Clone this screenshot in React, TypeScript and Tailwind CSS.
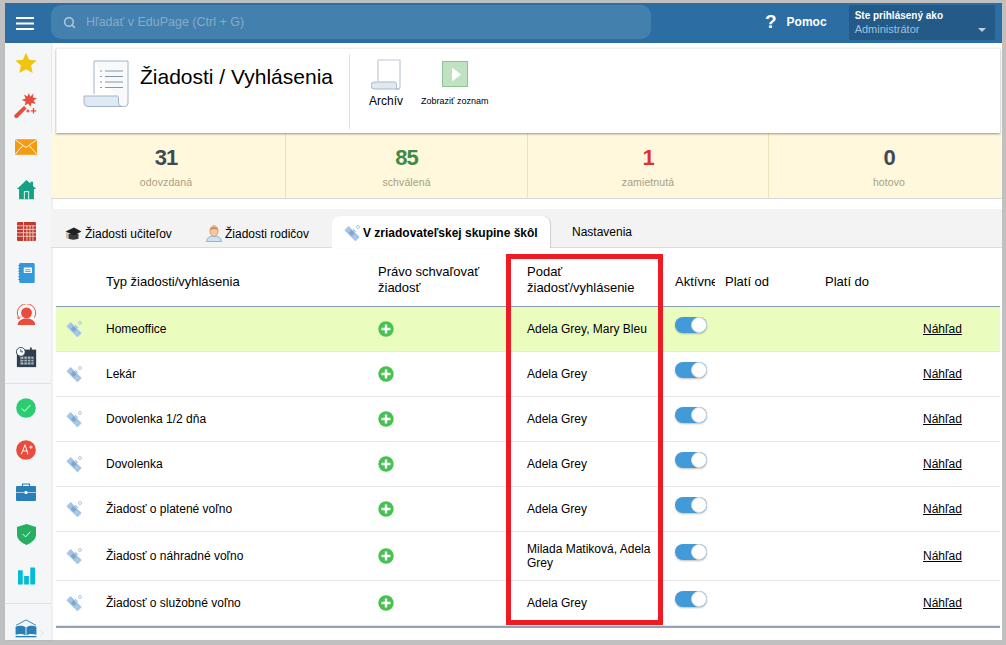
import React from 'react';
import { ChevronRight, Search } from 'lucide-react';

const FONT = "font-['Liberation_Sans',Arial,sans-serif]";

const Hamburger = () => (
  <svg width="18" height="13" viewBox="0 0 18 13">
    <path d="M0 1h18M0 6.500h18M0 12h18" stroke="#fff" strokeWidth="2" />
  </svg>
);

const Star = () => (
  <svg width="22" height="22" viewBox="0 0 24 24">
    <path d="M12 .8l3.4 7.6 8.3.9-6.2 5.500 1.800 8.200L12 18.800l-7.300 4.200 1.800-8.200L.3 9.300l8.300-.9z" fill="#f1c40f" />
  </svg>
);

const Wand = () => (
  <svg width="24" height="26" viewBox="0 0 24 26">
    <path d="M1 22.500l9-8.500 2.600 2.600-8.800 8.900a1.600 1.600 0 0 1-2.800-3z" fill="#e74c3c" />
    <path d="M15 1l1.200 3.800L19.500 1.500l-.6 4 4.100.7-3.400 2.300 2 3.500-4-1-1.200 3.800-2.200-3.300-3.500 1.900.9-4-3.900-1.400 3.900-1.600L10 2.500l3.300 2z" fill="#e74c3c" />
    <path d="M19.500 16v5.500M16.800 18.800h5.500M14 17.500v3M12.500 19h3" stroke="#e74c3c" strokeWidth="1.300" />
  </svg>
);

const Mail = () => (
  <svg width="22" height="16" viewBox="0 0 24 17">
    <rect width="24" height="17" fill="#f39c12" />
    <path d="M0 .5l12 8.500L24 .5M0 16.500l8.500-9.500M24 16.500L15.500 7" stroke="#fff" strokeWidth="1" fill="none" />
  </svg>
);

const Home = () => (
  <svg width="21" height="21" viewBox="0 0 24 24">
    <path d="M12 1L1 11.500h2.500V23h17V11.500H23l-3.500-3.400V3h-3v2.200z" fill="#16a085" />
    <rect x="9" y="14" width="6" height="9" fill="#fff" />
    <rect x="10" y="15" width="4" height="8" fill="#16a085" />
  </svg>
);

const Timetable = () => (
  <svg width="19" height="19" viewBox="0 0 22 22">
    <rect width="22" height="22" rx="1.500" fill="#c0392b" />
    <path d="M7.500 0v22M11.500 4v18M15 4v18M18.500 4v18M0 4.500h22M0 8.500h22M0 12.500h22M0 16.500h22" stroke="#f5d5d0" strokeWidth="1" />
  </svg>
);

const Notebook = () => (
  <svg width="17" height="20" viewBox="0 0 18 22">
    <rect x="1" width="17" height="22" rx="1.500" fill="#3498db" />
    <path d="M0 3h2M0 6h2M0 9h2M0 12h2M0 15h2M0 18h2" stroke="#2471a3" strokeWidth="1" />
    <rect x="6" y="5" width="9" height="6" fill="#fff" />
    <rect x="7.500" y="7" width="6" height="1" fill="#3498db" />
    <rect x="7.500" y="9" width="6" height="1" fill="#3498db" />
  </svg>
);

const PersonRing = () => (
  <svg width="21" height="22" viewBox="0 0 24 24">
    <path d="M3 15a10.500 10.500 0 1 1 18 0" fill="none" stroke="#e74c3c" strokeWidth="1.100" />
    <path d="M1 15l2.500 1.500L5 13.500" fill="none" stroke="#e74c3c" strokeWidth="1" />
    <circle cx="12" cy="9.500" r="6.200" fill="#e74c3c" />
    <path d="M2 23.500c0-4.500 4-6 7-7.500h6c3 1.500 7 3 7 7.500z" fill="#e74c3c" />
  </svg>
);

const CalendarClock = () => (
  <svg width="21" height="21" viewBox="0 0 24 24">
    <rect x="1" y="3" width="22" height="20" fill="#2c3e50" />
    <path d="M17 .5v4" stroke="#2c3e50" strokeWidth="2" />
    <path d="M5 11h15v9H5z" fill="#aeb6bf" />
    <path d="M5 14h15M5 17h15M9 11v9M13 11v9M17 11v9" stroke="#2c3e50" strokeWidth="1" />
    <circle cx="5.500" cy="5.500" r="5" fill="#fff" stroke="#2c3e50" strokeWidth="1" />
    <path d="M5.500 2.500v3h2.500" fill="none" stroke="#2c3e50" strokeWidth="1" />
  </svg>
);

const CheckBadge = () => (
  <svg width="20" height="20" viewBox="0 0 21 21">
    <circle cx="10.500" cy="10.500" r="10.300" fill="#2ecc71" />
    <path d="M6 11l3 3 6-6.500" fill="none" stroke="#fff" strokeWidth="1" />
  </svg>
);

const Grade = () => (
  <svg width="20" height="20" viewBox="0 0 21 21">
    <circle cx="10.500" cy="10.500" r="10.300" fill="#e74c3c" />
    <path d="M5.500 15L9.500 5l3 10M7 11.500h5M14 7.500h3.500M15.700 5.800v3.400" fill="none" stroke="#fff" strokeWidth="1" />
  </svg>
);

const Briefcase = () => (
  <svg width="20" height="18" viewBox="0 0 20 18">
    <path d="M6.500 3V1h7v2" fill="none" stroke="#2980b9" strokeWidth="1.200" />
    <rect y="3" width="20" height="15" rx="1" fill="#2980b9" />
    <path d="M0 9.500h20" stroke="#a9cce3" strokeWidth="1" />
    <rect x="8.500" y="8" width="3" height="3" rx="1" fill="#fff" />
  </svg>
);

const Shield = () => (
  <svg width="19" height="21" viewBox="0 0 20 22">
    <path d="M10 0l10 3v8c0 5-4 8.500-10 11C4 19.500 0 16 0 11V3z" fill="#27ae60" />
    <path d="M6 10.500l3 3 5-5.500" fill="none" stroke="#fff" strokeWidth="1" />
  </svg>
);

const Bars = () => (
  <svg width="17" height="18" viewBox="0 0 18 18">
    <rect y="3" width="5" height="15" fill="#00bcd4" />
    <rect x="6.500" y="9" width="5" height="9" fill="#00bcd4" />
    <rect x="13" width="5" height="18" fill="#00bcd4" />
  </svg>
);

const Book = () => (
  <svg width="22" height="19" viewBox="0 0 23 21">
    <path d="M.500 7L11.500 1l11 6" fill="none" stroke="#2980b9" strokeWidth="1" />
    <path d="M0 8.500c4-1.500 8-1 11 .5v9c-3-1.500-7-2-11-.5zM23 8.500c-4-1.500-8-1-11 .5v9c3-1.500 7-2 11-.5z" fill="#2980b9" />
    <path d="M0 19.500h23" stroke="#2980b9" strokeWidth="1.500" />
  </svg>
);

const ScrollDoc = () => (
  <svg width="48" height="48" viewBox="0 0 48 48">
    <path d="M11 1h34v42a3.500 3.500 0 0 1-3.500 3.500H38" fill="#f7f9fb" stroke="#a3b3c6" strokeWidth="1" />
    <path d="M11 1v33" stroke="#a3b3c6" strokeWidth="1" />
    <path d="M1 36h33c1 0 1.500.6 1.500 1.500v5.500a3.500 3.500 0 0 0 3.500 3.500H5a4 4 0 0 1-4-4z" fill="#dfe9f1" stroke="#a3b3c6" strokeWidth="1" />
    <path d="M22 11h18M22 16.500h18M22 22h18M22 27.500h18" stroke="#8496a9" strokeWidth="1" />
    <path d="M17 11h2M17 16.500h2M17 22h2M17 27.500h2" stroke="#8496a9" strokeWidth="1" />
  </svg>
);

const ArchiveIcon = () => (
  <svg width="31" height="31" viewBox="0 0 31 31">
    <path d="M7 1h22v27a2 2 0 0 1-2 2h-3" fill="#fff" stroke="#bfc8d4" strokeWidth="1.200" />
    <path d="M7 1v21" stroke="#bfc8d4" strokeWidth="1.200" />
    <path d="M3.500 23H24c1 0 1.500.8 1.500 3.500s.5 3.500 2 3.500H3.500a3.500 3.500 0 0 1 0-7z" fill="#dfe9f1" stroke="#a9b7c6" strokeWidth="1" />
  </svg>
);

const PlayIcon = () => (
  <svg width="26" height="26" viewBox="0 0 26 26">
    <rect x=".500" y=".500" width="25" height="25" fill="#bfe3c2" stroke="#8fc396" />
    <path d="M10 6.500l9 7-9 7z" fill="#fff" />
  </svg>
);

const Satellite = () => (
  <svg width="16" height="16" viewBox="0 0 16 16">
    <path d="M2.500 3.200L13.500 14.200" stroke="#a3c3e4" strokeWidth="6" />
    <path d="M1 6.500l3-3M3.500 9l3-3M9 14l3-3M11.500 16l3-3" stroke="#c5d9ee" strokeWidth=".7" />
    <path d="M6 6.500l3.200 3.200" stroke="#7ea7d0" strokeWidth="4" />
    <path d="M9 3.500a3.500 3.500 0 0 0 3.500 3.500z" fill="#8fb4da" />
    <circle cx="14" cy="2" r="1.500" fill="none" stroke="#a3c3e4" strokeWidth=".9" />
  </svg>
);

const GradCap = () => (
  <svg width="17" height="16" viewBox="0 0 17 16">
    <path d="M3.500 8v4.500c1.500 1.500 8 1.500 10 0V8z" fill="#3a3a3a" />
    <path d="M.500 5.500L9 1.500l7.500 4-7.500 4z" fill="#222" />
    <path d="M2 6.500v6" stroke="#e67e22" strokeWidth="1" />
  </svg>
);

const ParentIcon = () => (
  <svg width="16" height="17" viewBox="0 0 16 17">
    <path d="M.500 16.500c0-3.500 3-4.500 5-5.500h5c2 1 5 2 5 5.500z" fill="#cfe2f3" stroke="#7ba7cc" strokeWidth=".8" />
    <ellipse cx="8" cy="6" rx="4" ry="5.300" fill="#f6c9a4" stroke="#d08a56" strokeWidth=".8" />
    <path d="M4 5c1-4 7-4 8 0-2-1-6-1-8 0z" fill="#d08a56" />
  </svg>
);

const PlusCircle = () => (
  <svg width="16" height="16" viewBox="0 0 16 16">
    <circle cx="8" cy="8" r="7.700" fill="#46c24f" />
    <path d="M8 3.500v9M3.500 8h9" stroke="#fff" strokeWidth="2.400" />
  </svg>
);

const Toggle = () => (
  <div className="flex h-[16px] w-[32px] items-center justify-end rounded-full bg-[#429bd8] shadow-[0_1px_2px_rgba(0,0,0,0.25)]">
    <div className="h-[16px] w-[16px] rounded-full border border-[#d5d8dc] bg-white" />
  </div>
);

const sideTop = [Star, Wand, Mail, Home, Timetable, Notebook, PersonRing, CalendarClock];
const sideBottom = [CheckBadge, Grade, Briefcase, Shield, Bars];

const stats = [
  { value: '31', label: 'odovzdaná', color: 'text-[#3f4a57]', cell: 'w-[235px] pr-[4px] border-r' },
  { value: '85', label: 'schválená', color: 'text-[#3f8a4a]', cell: 'w-[242px] border-r' },
  { value: '1', label: 'zamietnutá', color: 'text-[#e03131]', cell: 'w-[241px] border-r' },
  { value: '0', label: 'hotovo', color: 'text-[#3f4a57]', cell: 'flex-1 pl-[7px]' },
];

const rows = [
  { name: 'Homeoffice', who: 'Adela Grey, Mary Bleu', height: 'h-[45px]', bg: 'bg-[#ebfdbe]' },
  { name: 'Lekár', who: 'Adela Grey', height: 'h-[45px]', bg: 'bg-white' },
  { name: 'Dovolenka 1/2 dňa', who: 'Adela Grey', height: 'h-[45px]', bg: 'bg-white' },
  { name: 'Dovolenka', who: 'Adela Grey', height: 'h-[45px]', bg: 'bg-white' },
  { name: 'Žiadosť o platené voľno', who: 'Adela Grey', height: 'h-[45px]', bg: 'bg-white' },
  { name: 'Žiadosť o náhradné voľno', who: 'Milada Matiková, Adela Grey', height: 'h-[49px]', bg: 'bg-white' },
  { name: 'Žiadosť o služobné voľno', who: 'Adela Grey', height: 'h-[45px]', bg: 'bg-white' },
];

const COLS = 'grid-cols-[50px_272px_149px_148px_50px_100px_98px_1fr]';

export default function App() {
  return (
    <div className={`${FONT} h-[645px] w-[1006px] overflow-hidden bg-[#c0c0c0] pb-[5px] pl-[5px] pt-[3px] text-black`}>
      {/* top bar */}
      <div className="flex h-[40px] w-[997px] items-center bg-[#2c6da3]">
        <div className="flex w-[46px] justify-center pr-[6px]">
          <Hamburger />
        </div>
        <div className="-mt-[2px] flex h-[34px] w-[600px] items-center rounded-[10px] bg-[#4480ae] pl-[12px]">
          <Search size={13} strokeWidth={3} className="text-[#a9c4da]" />
          <span className="ml-[10px] text-[12.500px] text-[#86abc9]">Hľadať v EduPage (Ctrl + G)</span>
        </div>
        <div className="-mt-[2px] ml-[114px] flex items-center text-white">
          <span className="text-[19px] font-bold">?</span>
          <span className="ml-[10px] text-[12px] font-bold">Pomoc</span>
        </div>
        <div className="-mt-[2px] ml-[22px] flex h-[35px] w-[146px] flex-col rounded-[2px] bg-[#235a87] pl-[6px] pr-[9px] pt-[4px]">
          <span className="text-[10px] font-bold leading-[13px] text-white">Ste prihlásený ako</span>
          <div className="flex items-center justify-between">
            <span className="text-[11px] leading-[14px] text-[#9fc0de]">Administrátor</span>
            <span className="mt-[3px] border-x-[4px] border-t-[4px] border-x-transparent border-t-[#b9cfe2]" />
          </div>
        </div>
      </div>

      <div className="flex h-[597px] w-[997px] bg-white">
        {/* left icon rail */}
        <div className="flex w-[46px] shrink-0 flex-col bg-[#f4f6f8] shadow-[1px_0_2px_rgba(0,0,0,0.12)]">
          <div className="-mt-px">
            {sideTop.map((Icon, i) => (
              <div key={i} className="flex h-[42px] items-center justify-center pr-[4px]">
                <Icon />
              </div>
            ))}
          </div>
          <div className="mb-[3px] mt-[5px] h-px bg-[#dfe2e5]" />
          {sideBottom.map((Icon, i) => (
            <div key={i} className="flex h-[42px] items-center justify-center pr-[4px]">
              <Icon />
            </div>
          ))}
          <div className="mt-[6px] h-px bg-[#dfe2e5]" />
          <div className="flex items-center pl-[10px] pt-[15px]">
            <Book />
            <ChevronRight size={10} strokeWidth={1.500} className="mt-[8px] text-[#cfd3d8]" />
          </div>
        </div>

        <div className="relative min-w-0 flex-1">
          {/* page heading */}
          <div className="relative z-10 ml-[5px] mt-[5px] flex h-[85px] w-[944px] border-l border-t border-[#f0f0f0] bg-white shadow-[0_1px_2px_rgba(90,80,60,0.6)]">
            <div className="ml-[26px] mt-[11px]">
              <ScrollDoc />
            </div>
            <div className="ml-[9px] mt-[14px] text-[21px] leading-[27px]">Žiadosti / Vyhlásenia</div>
            <div className="ml-[16px] mt-[5px] h-[75px] w-px bg-[#dfe0e0]" />
            <div className="ml-[18px] mt-[10px] flex w-[36px] flex-col items-center">
              <ArchiveIcon />
              <span className="mt-[4px] text-[12px] leading-[14px]">Archív</span>
            </div>
            <div className="ml-[17px] mt-[12px] flex flex-col items-center">
              <PlayIcon />
              <span className="mt-[8px] text-[9px] leading-[12px]">Zobraziť zoznam</span>
            </div>
          </div>

          {/* stats */}
          <div className="flex h-[66px] border-b border-[#d9d9d9] bg-[#fff8dc]">
            {stats.map((s) => (
              <div key={s.label} className={`${s.cell} flex flex-col items-center border-[#efe3b8] pt-[12px]`}>
                <span className={`${s.color} text-[22px] font-bold leading-[26px] tracking-[-1px]`}>{s.value}</span>
                <span className="mt-[5px] text-[10.500px] leading-[13px] tracking-[0.1px] text-[#a69f86]">{s.label}</span>
              </div>
            ))}
          </div>

          {/* tabs */}
          <div className="mt-[10px] flex h-[39px] items-end border-b border-[#dcdcdc] bg-[#f3f3f3] text-[12px]">
            <div className="flex h-[31px] w-[139px] items-center pl-[14px] pt-[4px]">
              <GradCap />
              <span className="ml-[3px]">Žiadosti učiteľov</span>
            </div>
            <div className="flex h-[31px] w-[142px] items-center pl-[16px] pt-[4px]">
              <ParentIcon />
              <span className="ml-[3px]">Žiadosti rodičov</span>
            </div>
            <div className="-mb-px flex h-[32px] w-[218px] items-center rounded-t-[8px] bg-white pl-[12px] pt-[2px] shadow-[1px_0_1px_rgba(0,0,0,0.15)]">
              <Satellite />
              <span className="ml-[3px] font-bold">V zriadovateľskej skupine škôl</span>
            </div>
            <div className="flex h-[31px] items-center pl-[22px]">Nastavenia</div>
          </div>

          {/* requests table */}
          <div className="ml-[5px] w-[944px] text-[12px]">
            <div className={`grid h-[59px] items-center border-b border-[#8a9fb5] pt-[10px] text-[13px] ${COLS}`}>
              <div />
              <div>Typ žiadosti/vyhlásenia</div>
              <div className="-mt-[4px] leading-[16px]">Právo schvaľovať<br />žiadosť</div>
              <div className="-mt-[4px] leading-[16px]">Podať<br />žiadosť/vyhlásenie</div>
              <div className="w-[40px] overflow-hidden whitespace-nowrap">Aktívne</div>
              <div>Platí od</div>
              <div>Platí do</div>
              <div />
            </div>
            {rows.map((r) => (
              <div key={r.name} className={`grid ${COLS} ${r.height} ${r.bg} items-center border-b border-[#e8e8e8]`}>
                <div className="pl-[10px]">
                  <Satellite />
                </div>
                <div>{r.name}</div>
                <div>
                  <PlusCircle />
                </div>
                <div className="pr-[3px] leading-[14px]">{r.who}</div>
                <div className="-mt-[9px]">
                  <Toggle />
                </div>
                <div />
                <div />
                <div className="underline">Náhľad</div>
              </div>
            ))}
            <div className="h-[2px] bg-[#94a3b3]" />
          </div>

          {/* red annotation */}
          <div className="absolute left-[455px] top-[211px] z-20 h-[371px] w-[157px] border-[5px] border-[#ed1c24]" />
        </div>
      </div>
    </div>
  );
}
